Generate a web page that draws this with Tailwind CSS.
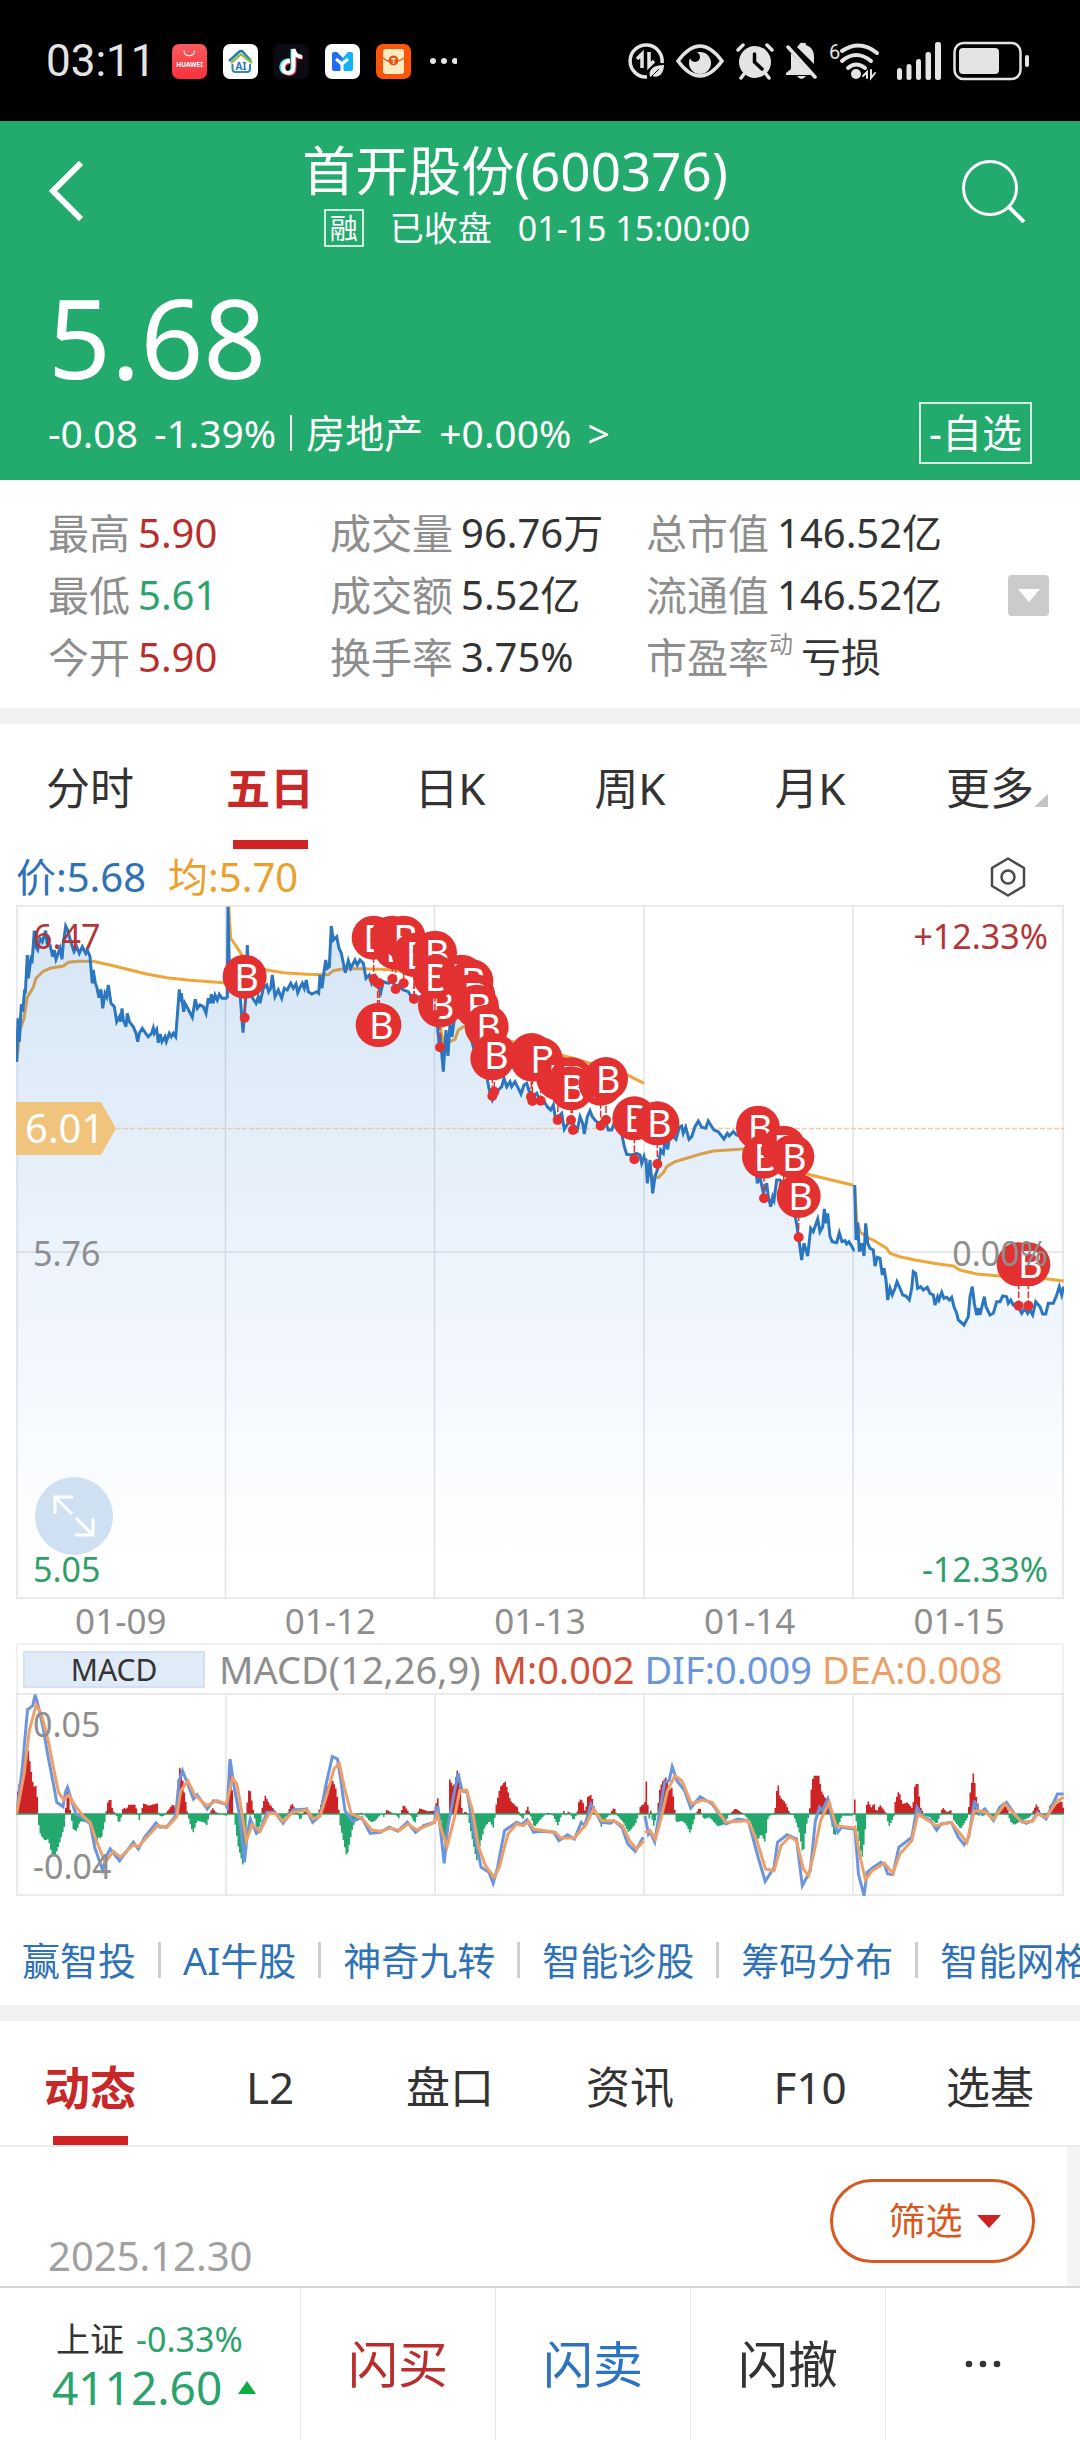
<!DOCTYPE html>
<html lang="zh-CN">
<head>
    <meta charset="UTF-8">
    <meta name="viewport" content="width=device-width, initial-scale=1.0">
    <title>首开股份(600376)</title>
    <script src="https://cdn.jsdelivr.net/npm/@tailwindcss/browser@4"></script>
    <style>
        body {
            font-family: 'Noto Sans', 'Noto Sans CJK SC', sans-serif;
        }
    </style>
</head>
<body class="bg-white text-[#333] min-h-screen flex flex-col overflow-x-hidden">

    <!-- Status bar -->
    <div class="bg-black text-[#e4e4e4] flex items-center justify-between pl-[46px] pr-[50px] pt-[37px] pb-[36px]">
        <div class="flex items-center gap-4">
            <span class="font-['Roboto'] text-[44px] leading-[48px]">03:11</span>
            <svg class="w-[35px] h-[35px]" viewBox="0 0 35 35">
                <defs><linearGradient id="hw" x2="0" y2="1"><stop stop-color="#fb5b5d"/><stop offset="1" stop-color="#f8303d"/></linearGradient></defs>
                <rect width="35" height="35" rx="7" fill="url(#hw)"/>
                <path d="M12 6.500C12 13.500 22.500 13.500 22.500 6.500" fill="none" stroke="#fff" stroke-width="1.200"/>
                <text x="17.500" y="23" text-anchor="middle" font-size="6.500" font-weight="700" fill="#fff">HUAWEI</text>
            </svg>
            <svg class="w-[35px] h-[35px]" viewBox="0 0 35 35">
                <rect width="35" height="35" rx="7" fill="#fff"/>
                <path d="M6 17L16 8Q18 6 20 8L28 17" fill="none" stroke="#2878b8" stroke-width="2.500"/>
                <path d="M8 19L17 11Q18 10 19 11L29 19" fill="none" stroke="#8dc04a" stroke-width="2.500"/>
                <path d="M9.500 20V25Q9.500 28 12.500 28H24Q27 28 27 25V20" fill="none" stroke="#2f86c0" stroke-width="2"/>
                <text x="18" y="25.500" text-anchor="middle" font-size="10" font-weight="700" fill="#2878b8">AI</text>
            </svg>
            <svg class="w-[35px] h-[35px]" viewBox="0 0 35 35">
                <rect width="35" height="35" rx="7" fill="#0b0b14"/>
                <g fill="none" stroke-width="4">
                    <path d="M15.500 16C5 16 5 29 13 29C17 29 18.500 27 18.500 23V5C19 9 22 12 27 12.500" stroke="#3fe0e0"/>
                    <path d="M17 18C8 18 8 30 15 30C19 30 20.500 28 20.500 24V7C21 11 24 13.500 29 13.500" stroke="#ee3352"/>
                    <path d="M16 17C7 17 7 29 14 29C18 29 19.500 27 19.500 23V5C20 9 23 12.500 28 13" stroke="#fff"/>
                </g>
            </svg>
            <svg class="w-[35px] h-[35px]" viewBox="0 0 35 35">
                <rect width="35" height="35" rx="7" fill="#fff"/>
                <path d="M7 10Q7 8 9 8H12L21 17L17 27H9Q7 27 7 25Z" fill="#1f6df0"/>
                <path d="M28 10Q28 8 26 8H23L14 18L19 27H26Q28 27 28 25Z" fill="#0db4f8"/>
                <path d="M11 15L17 20V28M23 15L17 20" fill="none" stroke="#fff" stroke-width="3"/>
            </svg>
            <svg class="w-[35px] h-[35px]" viewBox="0 0 35 35">
                <rect width="35" height="35" rx="7" fill="#fb560a"/>
                <rect x="7" y="5" width="21" height="25" rx="3" fill="#fdecc0"/>
                <path d="M7 14Q17 22 28 14" fill="none" stroke="#e0561a" stroke-width="1.500"/>
                <circle cx="17.500" cy="16.500" r="5" fill="#e8510f"/>
                <text x="17.500" y="19.500" text-anchor="middle" font-size="8" font-weight="700" fill="#fdecc0">T</text>
            </svg>
            <svg class="w-[30px] h-[10px]" viewBox="0 0 30 10" fill="#e4e4e4"><circle cx="6" cy="5" r="3"/><circle cx="17" cy="5" r="3"/><circle cx="28" cy="5" r="3"/></svg>
        </div>
        <div class="flex items-center gap-3">
            <svg class="w-[36px] h-[38px]" viewBox="0 0 36 38" fill="none" stroke="#e4e4e4" stroke-width="3.500">
                <path d="M34 21A16 16 0 1 0 19 35"/>
                <path d="M9 17L14 12V26M21 10V24L26 19"/>
                <path d="M22 35C20 27 26 23 36 23C36 31 31 37 24 34Z" fill="#e4e4e4" stroke="none"/>
                <path d="M21 37L31 27" stroke="#000" stroke-width="1"/>
            </svg>
            <svg class="w-[48px] h-[36px]" viewBox="0 0 48 36">
                <path d="M2 18Q24 -12 46 18Q24 48 2 18Z" fill="none" stroke="#e4e4e4" stroke-width="3.500"/>
                <circle cx="24" cy="20" r="11" fill="#e4e4e4"/><circle cx="19" cy="14" r="5" fill="#000"/>
            </svg>
            <svg class="w-[38px] h-[38px]" viewBox="0 0 38 38" fill="none" stroke="#e4e4e4" stroke-width="3.500" stroke-linecap="round">
                <circle cx="19" cy="20" r="16" fill="#e4e4e4" stroke="none"/>
                <path d="M2 8L7 3M36 8L31 3M8 32L5 36M30 32L33 36"/>
                <path d="M18.500 12V20L26 27" stroke="#000"/>
            </svg>
            <svg class="w-[31px] h-[38px]" viewBox="0 0 31 38" fill="#e4e4e4">
                <path d="M5 11L26 33H0V31L5 27ZM11 5L13 3Q14 0 17 1Q20 0 20 3Q28 6 28 14V22Z"/>
                <path d="M11 34H20Q15.500 40 11 34Z"/><path d="M2 5L29 35" stroke="#e4e4e4" stroke-width="3.500" stroke-linecap="round"/>
                <path d="M7 5L31 31" stroke="#000" stroke-width="2"/>
            </svg>
            <svg class="w-[50px] h-[40px] overflow-visible" viewBox="0 0 50 40" fill="none" stroke="#e4e4e4" stroke-width="4" stroke-linecap="round">
                <text x="0" y="18" font-size="20" fill="#e4e4e4" stroke="none" font-family="Roboto">6</text>
                <path d="M13 10Q31 -2 48 12M13 20Q27 8 42 20M19 27Q27 20 36 27"/>
                <circle cx="27" cy="33" r="5" fill="#e4e4e4" stroke="none"/>
                <path d="M34 35L38 31V37M42 29V37L46 32" stroke-width="2"/>
            </svg>
            <svg class="ml-[6px] w-[44px] h-[38px]" viewBox="0 0 44 38" fill="#e4e4e4">
                <rect y="26" width="5" height="12" rx="2.500"/><rect x="9.500" y="22" width="5" height="16" rx="2.500"/><rect x="19" y="17" width="5" height="21" rx="2.500"/><rect x="28.500" y="10" width="5.500" height="28" rx="2.500"/><rect x="38" width="6" height="38" rx="2.500"/>
            </svg>
            <svg class="w-[77px] h-[40px]" viewBox="0 0 77 40" fill="none">
                <rect x="1.500" y="2" width="66" height="36" rx="9" stroke="#e4e4e4" stroke-width="2.500"/>
                <rect x="6" y="7" width="40" height="26" rx="4" fill="#e4e4e4"/><rect x="72" y="14" width="4" height="12" rx="2" fill="#e4e4e4"/>
            </svg>
        </div>
    </div>

    <!-- Quote header -->
    <header class="bg-[#23ab6e] text-white px-12 pt-[18px] pb-[16px]">
        <div class="flex justify-between">
            <button aria-label="返回" class="w-16 h-[104px] flex items-center">
                <svg class="w-[36px] h-[60px]" viewBox="0 0 36 60" fill="none" stroke="#fff" stroke-width="6"><path d="M33 2L5 30L33 58"/></svg>
            </button>
            <div class="flex flex-col items-center">
                <h1 class="text-[53px] leading-[64px] pr-11">首开股份(600376)</h1>
                <p class="flex items-center gap-[26px] text-[34px] leading-[50px]">
                    <span class="border-2 border-white/80 w-[40px] h-[38px] text-[28px] leading-[34px] text-center">融</span>
                    <span>已收盘</span>
                    <time>01-15 15:00:00</time>
                </p>
            </div>
            <button aria-label="搜索" class="w-[70px] h-[104px] flex items-center">
                <svg class="w-[64px] h-[64px]" viewBox="0 0 64 64" fill="none" stroke="#fff" stroke-width="3"><circle cx="28" cy="29" r="26.500"/><path d="M46 47L62 63" stroke-width="4"/></svg>
            </button>
        </div>
        <div class="text-[110px] leading-[120px] mt-[23px]">5.68</div>
        <div class="flex items-center justify-between mt-[6px]">
            <a href="#" class="flex items-center text-[39px] leading-[54px]">
                <span>-0.08</span><span class="ml-4">-1.39%</span>
                <i class="w-[2px] h-9 bg-white mx-[14px]"></i>
                <span>房地产</span><span class="ml-4">+0.00%</span><span class="ml-4">&gt;</span>
            </a>
            <button class="border-2 border-white/80 text-[40px] leading-[58px] px-2">-自选</button>
        </div>
    </header>

    <!-- Key figures -->
    <section class="flex items-center pl-12 pr-[31px] pt-[22px] pb-[20px]">
        <dl class="grow grid grid-cols-[282fr_316fr_362fr] text-[40px] leading-[62px] whitespace-nowrap">
            <div class="flex gap-2"><dt class="text-[#8e8e8e] text-[41px]">最高</dt><dd class="text-[#b92d2d]">5.90</dd></div>
            <div class="flex gap-2"><dt class="text-[#8e8e8e] text-[41px]">成交量</dt><dd>96.76万</dd></div>
            <div class="flex gap-2"><dt class="text-[#8e8e8e] text-[41px]">总市值</dt><dd>146.52亿</dd></div>
            <div class="flex gap-2"><dt class="text-[#8e8e8e] text-[41px]">最低</dt><dd class="text-[#2ba36c]">5.61</dd></div>
            <div class="flex gap-2"><dt class="text-[#8e8e8e] text-[41px]">成交额</dt><dd>5.52亿</dd></div>
            <div class="flex gap-2"><dt class="text-[#8e8e8e] text-[41px]">流通值</dt><dd>146.52亿</dd></div>
            <div class="flex gap-2"><dt class="text-[#8e8e8e] text-[41px]">今开</dt><dd class="text-[#b92d2d]">5.90</dd></div>
            <div class="flex gap-2"><dt class="text-[#8e8e8e] text-[41px]">换手率</dt><dd>3.75%</dd></div>
            <div class="flex gap-2"><dt class="text-[#8e8e8e] text-[41px] flex">市盈率<span class="text-[24px] leading-[36px]">动</span></dt><dd>亏损</dd></div>
        </dl>
        <button aria-label="展开" class="w-[41px] h-[41px] bg-[#cbcbcb] rounded-sm flex items-center justify-center">
            <svg class="w-[22px] h-[13px]" viewBox="0 0 22 13"><path d="M0 0H22L11 13Z" fill="#fff"/></svg>
        </button>
    </section>

    <div class="h-4 bg-[#f1f1f1]"></div>

    <!-- Period tabs -->
    <nav class="grid grid-cols-6 text-[44px] leading-[64px] pt-[32px]">
        <button class="pb-[29px]">分时</button>
        <button class="flex flex-col items-center font-bold text-[#c92828]">五日<i class="mt-5 w-[75px] h-[9px] bg-[#cf2323]"></i></button>
        <button class="pb-[29px]">日K</button>
        <button class="pb-[29px]">周K</button>
        <button class="pb-[29px]">月K</button>
        <button class="pb-[29px] relative">更多<svg class="absolute right-[32px] top-[38px] w-[14px] h-[13px]" viewBox="0 0 14 13"><path d="M14 0V13H0Z" fill="#c4c4c4"/></svg></button>
    </nav>

    <!-- Price chart -->
    <section class="mx-4">
        <div class="flex items-center text-[40px] leading-[56px]">
            <span class="text-[#2f72b5]">价:5.68</span>
            <span class="ml-[22px] text-[#eba02c]">均:5.70</span>
            <button aria-label="设置" class="ml-auto mr-[38px]">
                <svg class="w-[36px] h-[40px]" viewBox="0 0 36 40" fill="none" stroke="#4a4a4a" stroke-width="2.500" stroke-linejoin="round"><path d="M18 1.500L34 11V29L18 38.500L2 29V11Z"/><circle cx="18" cy="20" r="6.500"/></svg>
            </button>
        </div>
        <div class="relative">
            <svg class="w-full h-auto block" viewBox="0 0 1048 694" font-size="34">
                <defs>
                    <linearGradient id="fill" gradientUnits="userSpaceOnUse" x1="0" y1="0" x2="0" y2="694"><stop stop-color="#2878c8" stop-opacity=".2"/><stop offset=".95" stop-color="#3c8cf0" stop-opacity="0"/></linearGradient>
                </defs>
                <path d="M1 1H1047V693H1ZM209.500 0V694M418.500 0V694M628 0V694M837 0V694M0 347H1048" fill="none" stroke="#e2e4e7" stroke-width="1.500"/>
                <g id="average" fill="none" stroke="#eea63a" stroke-width="3"></g>
                <g id="area" fill="url(#fill)"></g>
                <path d="M100 223.500H1048" stroke="#efc9a4" stroke-width="1.500" stroke-dasharray="5 2"/>
                <g id="price" fill="none" stroke="#2b76c0" stroke-width="3"></g>
                <g id="trades" font-size="38"></g>
                <path d="M0 197H85L100 223.500L85 250H0Z" fill="#f0c47c"/>
                <text x="9" y="238" font-size="40" fill="#fff">6.01</text>
                <text x="17" y="44" fill="#b33636">6.47</text>
                <text x="17" y="361" fill="#8e8e8e">5.76</text>
                <text x="17" y="677" fill="#2f9e6a">5.05</text>
                <g text-anchor="end">
                    <text x="1032" y="44" fill="#b33636">+12.33%</text>
                    <text x="1032" y="361" fill="#8e8e8e">0.00%</text>
                    <text x="1032" y="677" fill="#2f9e6a">-12.33%</text>
                </g>
            </svg>
            <button aria-label="全屏" class="absolute left-[19px] bottom-[44px] w-[78px] h-[78px] rounded-full bg-[#cfe0f3] flex items-center justify-center">
                <svg class="w-[42px] h-[42px]" viewBox="0 0 42 42" fill="none" stroke="#fff" stroke-width="3"><path d="M2 19V2H20M2 2L19 19M40 23V40H22M40 40L23 23"/></svg>
            </button>
        </div>
        <div class="grid grid-cols-5 text-center text-[35px] leading-[44px] text-[#8e8e8e]">
            <time>01-09</time><time>01-12</time><time>01-13</time><time>01-14</time><time>01-15</time>
        </div>
    </section>

    <!-- MACD -->
    <section class="mx-4">
        <div class="flex items-center border-2 border-b-0 border-[#f1f1f1] text-[38px] leading-[48px] whitespace-nowrap">
            <button class="ml-[5px] w-[182px] h-[37px] border-2 border-[#d4e1f4] bg-[#e1ebf7] text-[30px] leading-[33px]">MACD</button>
            <span class="ml-[14px] text-[#8e8e8e]">MACD(12,26,9)</span>
            <span class="ml-3 text-[#d0523a]">M:0.002</span>
            <span class="ml-[10px] text-[#6b95dc]">DIF:0.009</span>
            <span class="ml-[10px] text-[#ec9f66]">DEA:0.008</span>
        </div>
        <svg class="w-full h-auto block" viewBox="0 0 1048 203" font-size="34">
            <path d="M1 1H1047V202H1ZM210 0V203M419 0V203M628 0V203M837 0V203" fill="none" stroke="#ebebeb" stroke-width="2"/>
            <path id="barsUp" fill="#cd2326"/>
            <path id="barsDown" fill="#23a86d"/>
            <path d="M0 121H1048" stroke="#23a86d" stroke-width="1.500"/>
            <g id="dif" fill="none" stroke="#6b95dc" stroke-width="3"></g>
            <g id="dea" fill="none" stroke="#ec9f68" stroke-width="3"></g>
            <text x="17" y="44" fill="#8e8e8e">0.05</text>
            <text x="17" y="186" fill="#8e8e8e">-0.04</text>
        </svg>
    </section>

    <!-- Shortcuts -->
    <nav class="flex items-center pl-[22px] pt-[38px] pb-[19px] text-[38px] leading-[52px] text-[#2f72b5] whitespace-nowrap overflow-hidden">
        <a href="#" class="shrink-0">赢智投</a><i class="shrink-0 mx-[22px] w-[3px] h-9 bg-[#cfcfcf]"></i>
        <a href="#" class="shrink-0">AI牛股</a><i class="shrink-0 mx-[22px] w-[3px] h-9 bg-[#cfcfcf]"></i>
        <a href="#" class="shrink-0">神奇九转</a><i class="shrink-0 mx-[22px] w-[3px] h-9 bg-[#cfcfcf]"></i>
        <a href="#" class="shrink-0">智能诊股</a><i class="shrink-0 mx-[22px] w-[3px] h-9 bg-[#cfcfcf]"></i>
        <a href="#" class="shrink-0">筹码分布</a><i class="shrink-0 mx-[22px] w-[3px] h-9 bg-[#cfcfcf]"></i>
        <a href="#" class="shrink-0">智能网格</a>
    </nav>

    <div class="h-4 bg-[#f1f1f1]"></div>

    <!-- Content tabs -->
    <nav class="grid grid-cols-6 text-[44px] leading-[64px] pt-[34px] border-b-2 border-[#ebebeb]">
        <button class="flex flex-col items-center font-bold text-[46px] text-[#c92828]">动态<i class="mt-[17px] w-[75px] h-[9px] bg-[#cf2323]"></i></button>
        <button class="pb-[26px]">L2</button>
        <button class="pb-[26px]">盘口</button>
        <button class="pb-[26px]">资讯</button>
        <button class="pb-[26px]">F10</button>
        <button class="pb-[26px]">选基</button>
    </nav>

    <section class="flex justify-between pl-12 pr-8 border-r-[13px] border-[#f4f4f4] pt-[32px] grow">
        <time class="self-end text-[40px] leading-[60px] text-[#a0a0a0]">2025.12.30</time>
        <button class="h-[84px] w-[205px] pl-[24px] rounded-[42px] border-3 border-[#d85820] text-[#d85820] text-[37px] flex items-center justify-center gap-[14px]">
            筛选<svg class="w-[24px] h-[13px]" viewBox="0 0 24 13"><path d="M0 0H24L12 13Z" fill="#cf2323"/></svg>
        </button>
    </section>

    <!-- Trade bar -->
    <footer class="grid grid-cols-[301fr_195fr_195fr_195fr_194fr] border-t-2 border-[#d6d6d6] divide-x divide-[#e6e6e6] text-[50px]">
        <a href="#" class="pl-[52px] pt-[28px] pb-[28px]">
            <div class="text-[34px] leading-[46px] pl-1">上证<span class="ml-3 text-[#2ba36c]">-0.33%</span></div>
            <div class="flex items-center gap-[16px] text-[46px] leading-[50px] text-[#2ba36c]">4112.60<svg class="w-[18px] h-[13px]" viewBox="0 0 18 13"><path d="M9 0L18 13H0Z" fill="#0bab45"/></svg></div>
        </a>
        <button class="text-[#b92d2d]">闪买</button>
        <button class="text-[#2c74c0]">闪卖</button>
        <button>闪撤</button>
        <button aria-label="更多操作" class="flex items-center justify-center">
            <svg class="w-[36px] h-[8px]" viewBox="0 0 36 8" fill="#333"><circle cx="4" cy="4" r="3.300"/><circle cx="18" cy="4" r="3.300"/><circle cx="32" cy="4" r="3.300"/></svg>
        </button>
    </footer>

    <script>
        // --- Data: "x,y" runs, each with its own origin and three units to a pixel ---
        const priceRuns = [
            [[-48, -15, '50,485 54,355 58,425 64,312 68,335 74,268 76,280 82,165 85,235 92,180 96,190 103,92 107,140 113,150 120,115 127,125 137,92 141,130 150,135 158,170 163,150 168,178 180,145 186,178 190,130 197,78 203,90 212,125 222,155 230,140 238,160 247,140 257,160 262,150 270,170 277,250 280,210 286,250 290,260 297,293 303,268 308,325 315,280 320,290 325,255 333,310 343,320 350,365 358,350 362,365 366,325 370,360 378,380 382,340 388,365 400,380 408,400 413,425 418,400 427,385 437,400 445,410 455,400 460,385 463,400 470,388 475,428 481,402 486,425 495,410 499,425 508,400 514,410 520,400 527,410 531,360 538,268 541,305 544,280 551,335 555,310 563,325 577,352 586,298 592,325 600,315 610,320 618,340 625,295 630,310 634,283 639,310 645,285 652,300 658,283 666,295 676,295 682,295']],
            [[-48, -15, '682,295 684,20 688,200 700,240 720,280 729,398 738,280 742,135 745,210 755,290 768,310 775,290 780,310 790,265 800,255 806,275 812,265 817,225 825,290 835,270 845,295 853,265 862,270 872,250 880,265 888,252 893,278 900,262 907,250 913,265 919,240 925,275 935,282 950,275 956,280 960,225 966,265 972,215 977,180 982,205 988,200 994,78 1000,120 1010,110 1017,145'],
             [972, -15, '4,160 8,180 16,218 25,182 32,205 45,180 52,195 60,180 70,190 78,235 88,225 95,250 105,230 115,260 122,278 130,245 145,250 160,245 165,265 175,255 190,270 205,275 220,300 240,290 255,300 275,310 285,310']],
            [[972, -15, '285,310 290,350 297,430 300,400 310,515 318,390 324,468 330,370 336,410 345,340 360,320 380,370 400,440 420,500 440,530 450,580 457,600 465,580 475,570 485,560 492,535 500,560 510,545 515,560 525,545 535,565 543,582 552,555 560,550 567,572 580,590 590,580 600,600 610,600 622,620 632,630 640,615 647,660 655,650 665,640 673,688 690,660 705,680 712,690 720,650 728,670 733,702 742,650 750,632 757,650 765,660 780,675 795,660 805,690 815,690 822,670 835,670 845,700 853,740 860,763 875,765 890,760 900,765 905,790 912,770 914,780']],
            [[972, -15, '914,780 918,780 922,850 930,780 938,880 945,830 950,815 955,800 962,750 970,760 975,720 983,748 990,700 1008,718'],
             [1872, 405, '118,262 125,258 130,280 137,262 147,298 155,290 165,260 175,243 185,262 197,265 205,243 212,255 222,270 235,275 245,288 252,297 262,280 268,288 280,275 290,285 330,290 345,350 352,430 360,410 370,460 380,430 385,470 392,500 398,470 402,480 410,420 420,420 440,440 460,510 468,540 477,600 485,660 492,610 503,648 512,565 520,575 533,537 540,575 548,560 553,507 558,550 563,520 570,590 577,605 590,608 598,578 606,605 615,602 620,612 627,605 636,620 641,630 644,630']],
            [[1872, 405, '644,435 648,600 653,548 658,635 665,610 672,648 677,550 683,610 690,625 700,630 705,678 712,652 720,655 727,705 732,685 738,720 743,780 750,745 757,765 765,745 771,725 780,745 788,765 798,768 808,780 815,745 820,695 827,700 833,745 842,740 850,750 862,742 870,760 880,765 885,795 893,770 897,780 905,757 912,775 920,772 928,780 935,772 942,800 950,820 955,840 972,855 985,830 990,770 997,740 1003,790 1010,825 1016,805 1020,825 1033,770 1038,800 1050,825 1060,820 1070,785 1080,785 1088,768 1100,770 1105,790 1112,780 1120,795 1130,790 1145,820 1155,805 1163,820 1170,810 1178,825 1187,785 1200,800 1208,822 1217,822 1225,790 1240,790 1250,765 1258,740 1265,765 1271,740']],
        ];

        const averageRuns = [
            [[-48, -15, '50,485 60,390 72,355 82,292 100,262 108,235 128,215 150,205 190,198 205,187 235,184 280,184 340,197 400,212 440,222 500,233 570,241 640,246 672,248']],
            [[-48, -15, '686,20 692,115 710,140 725,165 760,195 800,210 850,218 920,223 985,224 1000,212 1030,206 1080,206'], [972, -15, '120,208 165,210 240,225']],
            [[972, -15, '284,300 303,390 312,430 330,425 345,418 355,390 370,380 400,385 500,420 600,450 700,475 800,505 862,525 912,550']],
            [[972, -15, '915,780 925,810 938,830 955,833 970,818 980,800 1005,785 1080,763'], [1872, 405, '220,333 310,327 400,350 500,402 640,436']],
            [[1872, 405, '644,440 650,540 660,575 680,592 700,600 740,625 750,640 780,650 825,660 900,673 940,678 960,690 1010,702 1080,708 1180,712 1271,723']],
        ];

        // Buy marks: circle x, circle y, dot x, dot y
        const trades = [
            [686, 215, 686, 338],
            [1073, 98, 1073, 222], [1085, 360, 1085, 235], [1090, 360, 1090, 235],
            [1129, 98, 1129, 222], [1139, 128, 1139, 252], [1163, 98, 1163, 235], [1194, 150, 1194, 281],
            [1200, 150, 1194, 281], [1257, 143, 1257, 250], [1272, 301, 1272, 427], [1257, 215, 1257, 330],
            [1337, 215, 1337, 330], [1366, 228, 1366, 340], [1372, 272, 1372, 380], [1383, 305, 1383, 400],
            [1412, 365, 1412, 480], [1429, 460, 1429, 573], [1435, 450, 1435, 560],
            [1547, 450, 1545, 575], [1549, 464, 1549, 588], [1574, 463, 1574, 587],
            [1627, 520, 1625, 645], [1666, 523, 1665, 645], [1666, 550, 1671, 675],
            [1754, 536, 1754, 662], [1770, 522, 1770, 645],
            [1855, 640, 1855, 763], [1924, 655, 1924, 777],
            [2226, 668, 2226, 790], [2244, 755, 2244, 880], [2303, 728, 2303, 840], [2329, 755, 2329, 850], [2348, 873, 2348, 997],
            [3008, 1078, 3008, 1202], [3037, 1078, 3037, 1202],
        ];

        const bars = [
            '48,460 70,345 80,330 92,420 98,440 103,435 107,480 109,520 111,570 120,590 130,600 138,595 148,640 157,650 170,610 187,550 188,520 190,470 196,440 201,500 203,520 210,565 220,572 230,542 255,545 262,560 275,610 285,590 292,595 303,540 305,520 312,478 320,478 325,510 335,520 343,550 352,525 355,500 365,505 372,492 390,492 400,525 402,540 407,515 415,488 430,495 455,488 460,525 470,528 485,510 500,490 510,505 518,378 525,390 532,450 542,515 545,530 558,578 570,540 590,545 600,555 605,520 615,502 625,515 655,525 657,575 659,520 661,370 668,370 675,500 678,530 690,620 705,680 712,600 714,500 722,435 732,500 737,530 745,575 755,545 760,495 768,465 780,490 800,515 815,540 830,525 845,487 858,510 870,540 880,515 890,500 905,540 918,530 930,490 945,440 965,420 975,450 983,520 985,550 1005,650 1020,570 1030,535 1045,515 1058,525 1075,545 1088,540 1105,518 1112,530 1120,507 1150,525 1155,535 1170,492 1185,515 1203,548 1215,503 1240,512 1262,510 1268,460 1273,520 1278,540 1290,620 1300,550 1303,415 1315,440 1328,378 1335,450 1340,520 1350,512 1356,522 1370,600 1382,660 1395,600 1405,560 1420,540 1432,565 1437,500 1450,440 1465,422 1480,480 1500,500 1508,525 1517,535 1530,497 1540,530 1550,560',
            '0,535 20,515 35,522 50,555 60,525 66,508 72,525 82,510 95,540 105,520 112,475 122,480 130,520 135,470 147,462 155,500 165,520 175,560 188,535 200,522 213,500 223,525 240,545 255,575 275,550 283,525 290,495 302,490 305,397 310,480 314,540 320,508 327,560 338,520 345,450 352,425 365,408 372,450 382,440 390,515 394,545 410,540 422,550 434,578 445,540 450,520 462,500 473,535 490,530 515,557 535,550 545,525 565,503 590,520 610,545 630,600 640,580 652,605 660,530 680,515 688,422 695,470 710,485 722,515 735,525 750,570 762,645 770,560 780,520 787,430 792,405 808,405 815,450 825,470 838,480 843,540 853,590 865,555 875,525 905,525 910,520 913,455 916,540 925,600 933,655 942,580 945,500 950,480 960,500 968,488 975,515 985,492 1005,520 1010,560 1025,530 1030,480 1040,450 1050,490 1065,485 1080,505 1087,430 1095,430 1103,500 1115,525 1130,530 1150,550 1160,525 1167,500 1180,515 1192,508 1200,540 1220,565 1240,530 1248,450 1257,393 1265,470 1275,515 1285,530 1292,505 1310,540 1325,510 1342,485 1355,500 1362,540 1375,553 1395,540 1420,530 1428,515 1440,490 1455,525 1470,530 1480,490 1500,490 1512,480 1521,515',
        ];
        const dif = [
            ['48,520 65,380 80,207 95,195 102,162 112,200 125,260 140,350 155,430 165,485 183,498 190,455 196,440 205,470 220,520 240,530 262,550 275,620 298,688 312,640 320,625 347,660 365,635 387,605 402,625 420,590 453,547 465,560 485,558 510,525 520,420 530,390 545,430 562,475 572,462 602,505 620,480 655,490 660,500 668,355 680,440 695,520 710,665 718,580 727,535 745,578 755,570 775,515 798,515 822,548 850,508 890,505 908,545 930,525 945,440 965,348 980,355 990,420 1002,510 1025,542 1050,530 1075,578 1105,575 1130,560 1155,572 1183,545 1207,575 1230,555 1262,545 1266,500 1272,500 1290,668 1300,560 1330,398 1342,450 1357,455 1375,570 1397,680 1420,695 1432,728 1445,680 1465,570 1500,545 1515,552 1530,538 1550,575',
             '0,572 40,575 55,600 80,582 100,595 120,545 130,555 148,490 178,545 205,548 215,540 238,560 255,610 277,632 300,590'],
            ['', '305,525 315,580 320,572 333,603 345,530 362,425 375,420 384,378 398,420 420,450 438,502 465,468 500,490 540,550 575,535 605,540 635,655 654,722 680,680 690,605 718,582 745,595 762,735 785,690 800,540 812,500 820,510 836,475 850,545 865,575 875,560 912,565 915,570 925,700 941,765 950,695 968,680 990,665 1000,670 1010,700 1025,702 1042,620 1080,590 1095,500 1110,525 1135,540 1152,568 1165,550 1195,545 1215,590 1232,612 1245,590 1262,480 1275,520 1292,505 1317,540 1335,500 1355,485 1385,530 1412,548 1430,540 1445,515 1470,535 1485,500 1503,460 1521,460'],
        ];
        const dea = [
            ['48,520 70,400 85,270 105,192 120,220 140,300 155,380 170,455 185,478 200,462 215,490 240,525 262,545 280,600 305,665 330,632 350,650 387,612 402,618 430,585 458,555 485,560 513,528 525,450 545,420 565,462 600,495 630,480 655,490 660,480 675,412 688,430 700,500 715,600 732,552 755,572 780,520 800,518 822,542 850,515 890,508 910,535 930,525 950,460 970,385 985,368 1000,440 1020,520 1050,532 1080,568 1105,572 1135,562 1160,570 1185,550 1210,568 1262,545 1270,520 1280,560 1298,618 1320,530 1335,450 1355,448 1372,510 1390,620 1410,675 1435,710 1450,680 1475,580 1500,550 1520,555 1535,542 1550,565',
             '0,568 45,575 60,592 100,592 135,550 155,505 180,540 215,540 240,555 260,600 280,625 302,600'],
            ['', '305,575 320,570 335,595 350,540 370,450 392,405 412,420 440,490 470,478 500,485 540,545 605,540 630,600 655,685 680,690 700,615 725,588 745,600 765,685 780,705 795,640 815,540 840,485 860,555 912,562 915,560 930,650 945,718 965,690 1000,668 1025,698 1045,640 1080,600 1098,520 1150,555 1195,545 1240,605 1262,510 1290,512 1317,535 1350,490 1400,545 1430,542 1445,520 1470,530 1503,480 1521,470'],
        ];

        // --- Helpers ---
        const $ = (id) => document.getElementById(id);
        const parse = (text) => text.split(' ').filter(Boolean).map(p => p.split(',').map(Number));
        const toPoints = (run) => run.flatMap(([ox, oy, text]) => parse(text).map(([x, y]) => [(x + ox) / 3, (y + oy) / 3]));
        const toPath = (points) => 'M' + points.map(p => p[0].toFixed(1) + ' ' + p[1].toFixed(1)).join('L');

        // --- Price chart ---
        priceRuns.forEach(run => {
            const points = toPoints(run);
            const line = toPath(points);
            $('price').innerHTML += `<path d="${line}"/>`;
            $('area').innerHTML += `<path d="${line}V694H${points[0][0].toFixed(1)}Z"/>`;
        });
        averageRuns.forEach(run => {
            $('average').innerHTML += `<path d="${toPath(toPoints(run))}"/>`;
        });

        $('trades').innerHTML = trades.map(([x, y, dotX, dotY]) => `
            <path d="M${x / 3} ${y / 3}L${dotX / 3} ${dotY / 3}" stroke="#e33131" stroke-width="1.5" stroke-dasharray="7 2"/>
            <circle cx="${dotX / 3}" cy="${dotY / 3}" r="5" fill="#e33131"/>
            <circle cx="${x / 3}" cy="${y / 3}" r="22" fill="#e33131"/>
            <text x="${x / 3 + 2}" y="${y / 3 + 14}" text-anchor="middle" fill="#fff">B</text>`).join('');

        // --- MACD: the second half of each series starts at 1568 ---
        const macdPoints = ([first, second]) => parse(first)
            .concat(parse(second).map(([x, y]) => [x + 1568, y]))
            .map(([x, y]) => [x / 2.904 - 16, (y - 520) / 3 + 121]);

        dif.forEach(run => $('dif').innerHTML += `<path d="${toPath(macdPoints(run))}"/>`);
        dea.forEach(run => $('dea').innerHTML += `<path d="${toPath(macdPoints(run))}"/>`);

        const outline = macdPoints(bars);
        let up = '', down = '', i = 0;
        for (let x = 1; x < 1047; x += 1.5) {
            while (i < outline.length - 2 && outline[i + 1][0] < x) i++;
            const [x0, y0] = outline[i], [x1, y1] = outline[i + 1];
            const y = y0 + (y1 - y0) * Math.min(1, Math.max(0, (x - x0) / (x1 - x0)));
            const bar = `M${x} 121V${y.toFixed(1)}H${x + 1.6}V121Z`;
            if (y < 121) up += bar; else down += bar;
        }
        $('barsUp').setAttribute('d', up);
        $('barsDown').setAttribute('d', down);
    </script>
</body>
</html>
